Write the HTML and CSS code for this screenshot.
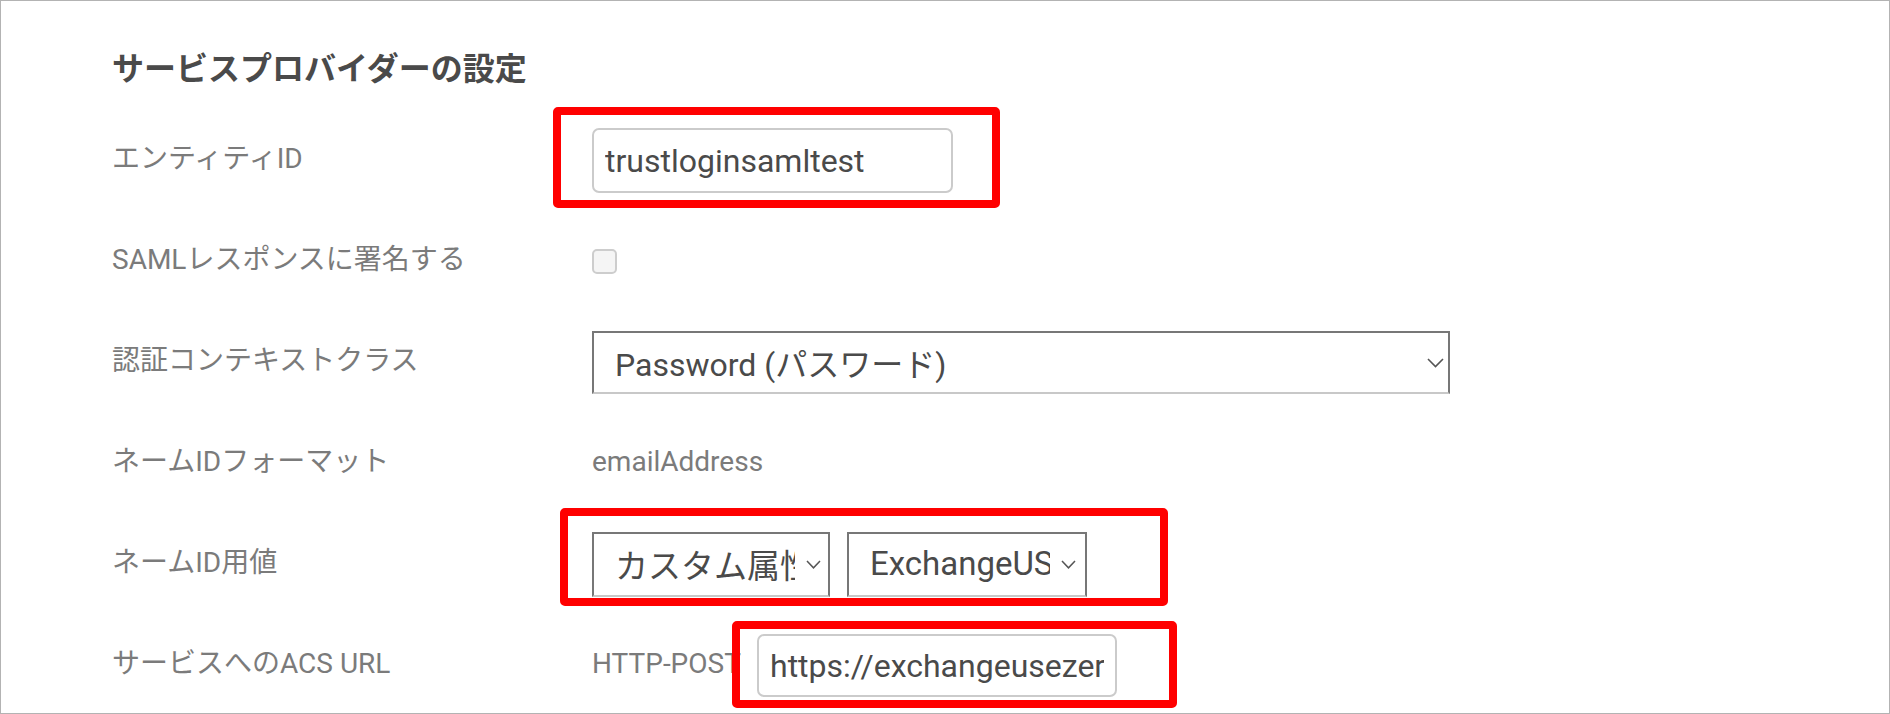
FILE: index.html
```html
<!DOCTYPE html>
<html lang="ja">
<head>
<meta charset="utf-8">
<title>サービスプロバイダーの設定</title>
<link rel="stylesheet" href="styles.css">
</head>
<body>
<div class="frame">
  <h2 class="title">サービスプロバイダーの設定</h2>
  <div class="form">
    <div class="label">エンティティID</div>
    <div class="field">
      <div class="mark mark-entity">
        <input class="text-input entity-input" type="text" value="trustloginsamltest">
      </div>
    </div>

    <div class="label">SAMLレスポンスに署名する</div>
    <div class="field">
      <input class="check" type="checkbox">
    </div>

    <div class="label">認証コンテキストクラス</div>
    <div class="field">
      <div class="select select-wide">
        <span class="select-text">Password (パスワード)</span>
        <svg class="chevron-lg" width="17" height="10" viewBox="0 0 17 10"><polyline points="1,1 8.5,8.5 16,1" fill="none" stroke="#555" stroke-width="1.6"/></svg>
      </div>
    </div>

    <div class="label">ネームIDフォーマット</div>
    <div class="field">
      <span class="value">emailAddress</span>
    </div>

    <div class="label">ネームID用値</div>
    <div class="field">
      <div class="mark mark-nameid">
        <div class="select select-small">
          <span class="select-text">カスタム属性</span>
          <svg class="chevron-sm" width="15" height="9" viewBox="0 0 15 9"><polyline points="1,1 7.5,7.8 14,1" fill="none" stroke="#555" stroke-width="1.5"/></svg>
        </div>
        <div class="select select-small select-small-2">
          <span class="select-text">ExchangeUSER</span>
          <svg class="chevron-sm" width="15" height="9" viewBox="0 0 15 9"><polyline points="1,1 7.5,7.8 14,1" fill="none" stroke="#555" stroke-width="1.5"/></svg>
        </div>
      </div>
    </div>

    <div class="label">サービスへのACS URL</div>
    <div class="field">
      <span class="value method">HTTP-POST</span>
      <div class="mark mark-acs">
        <input class="text-input acs-input" type="text" value="https://exchangeusezero.example.com/saml/acs">
      </div>
    </div>
  </div>
</div>
</body>
</html>
```

FILE: styles.css
```css
* {
  box-sizing: border-box;
}

body {
  margin: 0;
  background: #ffffff;
  font-family: Roboto, "Noto Sans CJK JP", sans-serif;
}

.frame {
  width: 1890px;
  height: 714px;
  border: 1px solid #b3b3b3;
  padding-left: 111px;
  overflow: hidden;
  background: #ffffff;
}

.title {
  margin: 0;
  height: 109px;
  padding-top: 49px;
  font-size: 32px;
  line-height: 38px;
  font-weight: 700;
  color: #4a4a4a;
}

.form {
  display: grid;
  grid-template-columns: 480px 1fr;
  grid-auto-rows: 101px;
  align-items: center;
}

.label {
  font-size: 28px;
  line-height: 34px;
  color: #7b7b7b;
  margin-top: -3px;
}

.field {
  display: flex;
  align-items: center;
}

.value {
  font-size: 28px;
  line-height: 34px;
  color: #7b7b7b;
  margin-top: -3px;
}

.method {
  width: 165px;
  white-space: nowrap;
}

.mark {
  position: relative;
  display: flex;
  align-items: center;
  gap: 17px;
}

.mark::after {
  content: "";
  position: absolute;
  border: 8px solid #ff0000;
  border-radius: 5px;
  pointer-events: none;
}

.mark-entity::after {
  left: -39px;
  right: -47px;
  top: -21px;
  bottom: -15px;
}

.mark-nameid::after {
  left: -32px;
  right: -81px;
  top: -24px;
  bottom: -9px;
}

.mark-acs::after {
  left: -25px;
  right: -60px;
  top: -13px;
  bottom: -11px;
}

.text-input {
  display: block;
  height: 65px;
  margin: 0;
  padding: 0 11px;
  border: 2px solid #cbcbcb;
  border-radius: 7px;
  background: #ffffff;
  font-family: Roboto, "Noto Sans CJK JP", sans-serif;
  font-size: 32px;
  color: #4a4a4a;
  outline: none;
}

.entity-input {
  width: 361px;
}

.acs-input {
  width: 360px;
  height: 63px;
}

.check {
  appearance: none;
  -webkit-appearance: none;
  display: block;
  width: 25px;
  height: 25px;
  margin: 0;
  border: 2px solid #cdcdcd;
  border-radius: 5px;
  background: #f5f5f5;
}

.select {
  display: flex;
  align-items: center;
  height: 63px;
  border: 2px solid #777777;
  border-bottom-color: #c8c8c8;
  padding: 0 4px 0 21px;
  background: #ffffff;
  font-size: 32px;
  color: #4a4a4a;
}

.select-wide {
  width: 858px;
}

.select-small {
  width: 238px;
  height: 65px;
  gap: 11px;
  padding-right: 7px;
  font-size: 33px;
}

.select-small-2 {
  width: 240px;
  padding-right: 9px;
}

.select-text {
  flex: 1;
  min-width: 0;
  overflow: hidden;
  white-space: nowrap;
  margin-top: -2px;
}

.chevron-lg,
.chevron-sm {
  flex: none;
  display: block;
}
```
